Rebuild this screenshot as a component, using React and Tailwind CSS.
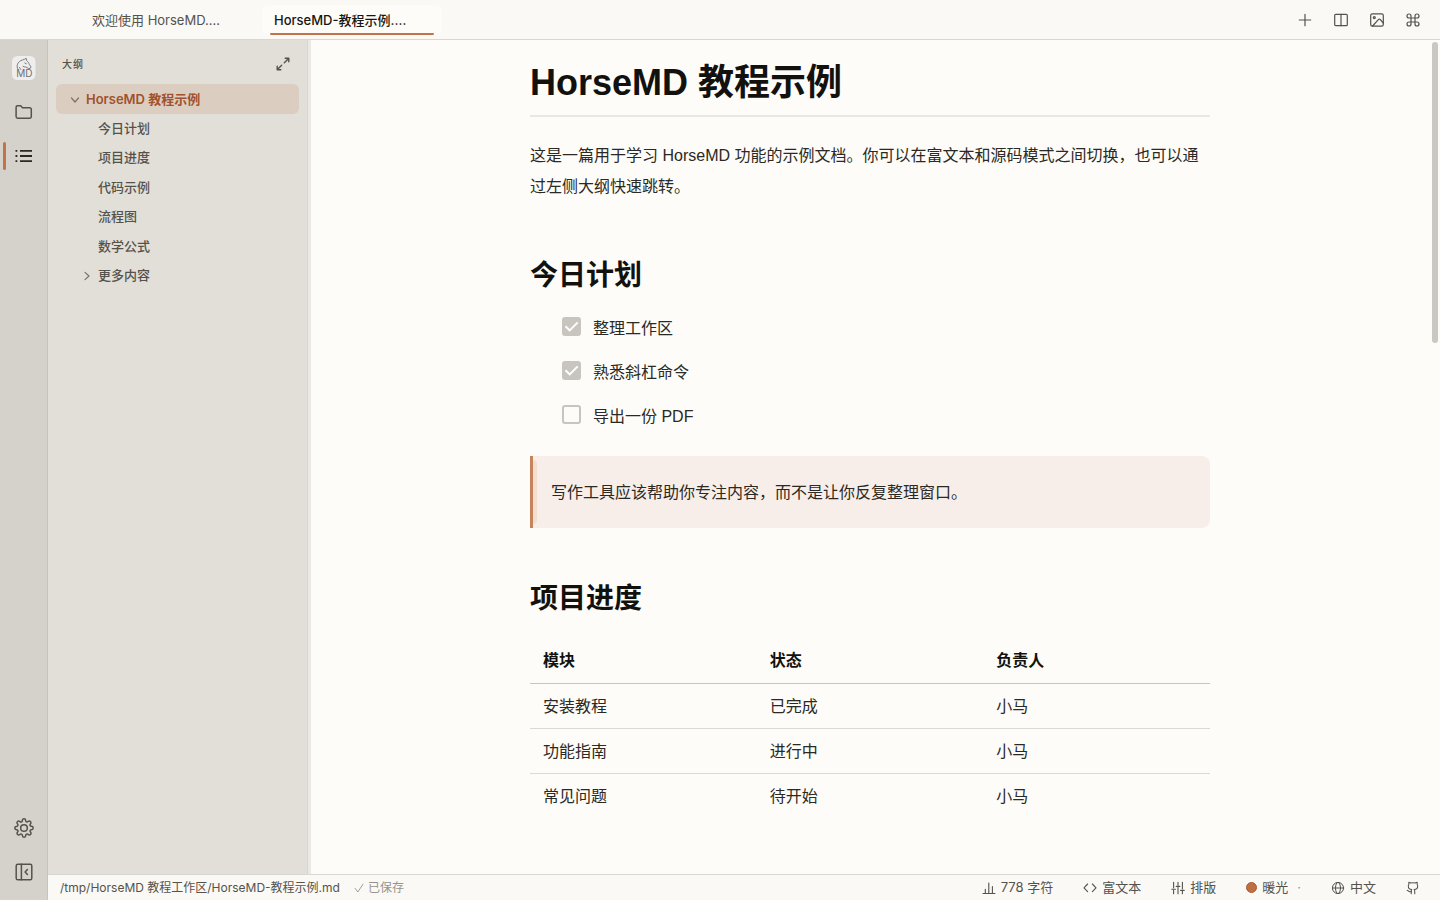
import React from "react";

const Icon = ({ children, size = 16, box = 16, sw = 1.2, className = "" }) => (
  <svg
    width={size}
    height={size}
    viewBox={`0 0 ${box} ${box}`}
    fill="none"
    stroke="currentColor"
    strokeWidth={sw}
    strokeLinecap="round"
    strokeLinejoin="round"
    className={`shrink-0 ${className}`}
    aria-hidden="true"
  >
    {children}
  </svg>
);

const PlusIcon = () => (
  <Icon><path d="M8 2.3v11.4M2.3 8h11.4" /></Icon>
);
const ColumnsIcon = () => (
  <Icon><rect x="1.7" y="2.3" width="12.6" height="11.4" rx="1" /><path d="M8 2.3v11.4" /></Icon>
);
const ImageIcon = () => (
  <Icon>
    <rect x="1.7" y="1.9" width="12.6" height="12.2" rx="1.6" />
    <circle cx="5.3" cy="5.6" r="1" />
    <path d="M3.6 14l6-6.6a1 1 0 0 1 1.5 0l3.2 3.6" />
  </Icon>
);
const CommandIcon = () => (
  <Icon size={16} box={24} sw={1.8}>
    <path d="M15 6v12a3 3 0 1 0 3-3H6a3 3 0 1 0 3 3V6a3 3 0 1 0-3 3h12a3 3 0 1 0-3-3" />
  </Icon>
);
const FolderIcon = () => (
  <Icon size={20} box={20} sw={1.5}>
    <path d="M2.100 14.600V5.200a1.400 1.400 0 0 1 1.400-1.400h3.200l1.800 2h7.200A1.600 1.600 0 0 1 17.300 7.400v7.200a1.600 1.600 0 0 1-1.600 1.600H3.700a1.600 1.600 0 0 1-1.600-1.600z" />
  </Icon>
);
const ListIcon = () => (
  <Icon size={20} box={20} sw={1.8}>
    <path d="M6 4.800H18M6 10H18M6 15.200H18" strokeLinecap="butt" />
    <path d="M1.500 4.800h1.800M1.500 10h1.800M1.500 15.200h1.800" strokeLinecap="butt" />
  </Icon>
);
const GearIcon = () => (
  <Icon size={20} box={24} sw={1.8}>
    <circle cx="12" cy="12" r="4" />
    <path d="M19.400 15a1.650 1.650 0 0 0 .33 1.820l.06.06a2 2 0 1 1-2.830 2.830l-.06-.06a1.650 1.650 0 0 0-1.820-.33 1.650 1.650 0 0 0-1 1.510V21a2 2 0 0 1-4 0v-.09A1.650 1.650 0 0 0 9 19.400a1.650 1.650 0 0 0-1.820.33l-.06.06a2 2 0 1 1-2.830-2.830l.06-.06a1.650 1.650 0 0 0 .33-1.820 1.650 1.650 0 0 0-1.510-1H3a2 2 0 0 1 0-4h.09A1.650 1.650 0 0 0 4.600 9a1.650 1.650 0 0 0-.33-1.820l-.06-.06a2 2 0 1 1 2.830-2.830l.06.06a1.650 1.650 0 0 0 1.820.33H9a1.650 1.650 0 0 0 1-1.510V3a2 2 0 0 1 4 0v.09a1.650 1.650 0 0 0 1 1.510 1.650 1.650 0 0 0 1.820-.33l.06-.06a2 2 0 1 1 2.830 2.830l-.06.06a1.650 1.650 0 0 0-.33 1.820V9a1.650 1.650 0 0 0 1.510 1H21a2 2 0 0 1 0 4h-.09a1.650 1.650 0 0 0-1.510 1z" />
  </Icon>
);
const CollapseIcon = () => (
  <Icon size={20} box={20} sw={1.5}>
    <rect x="2.200" y="2.200" width="15.600" height="15.600" rx="1.600" />
    <path d="M7.400 2.200v15.600M13.400 7.600L11.100 10l2.300 2.400" />
  </Icon>
);
const ExpandIcon = () => (
  <Icon size={16} sw={1.4}>
    <path d="M9.300 6.700L13.600 2.400M10.200 2.200h3.600v3.600M6.700 9.300L2.400 13.600M2.200 10.200V13.800h3.600" />
  </Icon>
);
const ChevronDown = () => (
  <Icon size={12} box={12}><path d="M2.500 4L6 8l3.500-4" /></Icon>
);
const ChevronRight = () => (
  <Icon size={12} box={12}><path d="M4 2.400L8 6l-4 3.600" /></Icon>
);
const ChartIcon = () => (
  <Icon size={14} box={14} sw={1.1}><path d="M1 12.500h12M3.300 12.300V8.200M6.800 12.300V2M10.400 12.300V5.600" /></Icon>
);
const CodeIcon = () => (
  <Icon size={14} box={14} sw={1.1}><path d="M4.600 3L1 6.800l3.600 3.800M9.400 3L13 6.800l-3.600 3.800" /></Icon>
);
const SlidersIcon = () => (
  <Icon size={14} box={14} sw={1.1}>
    <path d="M2.600 1.200v5.600M2.600 9.200v3.600M7 1.200v2.800M7 6.400v6.400M11.400 1.200v6.600M11.400 10.200v2.600M.8 8.200h3.600M5.200 5.400h3.600M9.600 9.400h3.600" />
  </Icon>
);
const GlobeIcon = () => (
  <Icon size={14} box={14} sw={1}>
    <circle cx="7" cy="7" r="5.600" />
    <ellipse cx="7" cy="7" rx="2.500" ry="5.600" />
    <path d="M1.400 7h11.200" />
  </Icon>
);
const GithubIcon = () => (
  <Icon size={14} box={24} sw={1.8}>
    <path d="M15 22v-4a4.800 4.800 0 0 0-1-3.500c3 0 6-2 6-5.500.08-1.250-.27-2.480-1-3.500.28-1.150.28-2.350 0-3.500 0 0-1 0-3 1.500-2.640-.5-5.360-.5-8 0C6 2 5 2 5 2c-.3 1.150-.3 2.350 0 3.500A5.403 5.403 0 0 0 4 9c0 3.500 3 5.500 6 5.500-.39.49-.68 1.050-.85 1.650-.17.6-.22 1.230-.15 1.850v4" />
    <path d="M9 18c-4.510 2-5-2-7-2" />
  </Icon>
);
const CheckIcon = () => (
  <Icon size={10} box={10} sw={0.9}><path d="M1.200 5.400L3.800 9 9 1.200" /></Icon>
);

const Logo = () => (
  <svg width="24" height="24" viewBox="0 0 24 24" className="shrink-0" role="img" aria-label="HorseMD">
    <rect x="0" y="0" width="23.500" height="24" rx="5.500" fill="#efeeec" />
    <g fill="none" stroke="#6d6e76" strokeWidth=".9" strokeLinecap="round" strokeLinejoin="round">
      <path d="M6 13.300C3.800 10.500 5.400 5.400 10.600 3.900l1.900-.5 1.600-1.200.5 2.400c1.600 1.200 2.200 2.600 2.800 4l1.600 2.300-.8 1.500-1.400.1-3.300-1.600c-1 .2-1.800 0-2.500-.5" />
      <path d="M12.800 7l1.500.7M8.800 13.500l-1.300-2" />
    </g>
    <text x="12.300" y="21.400" textAnchor="middle" fontSize="10" fill="#6d6e76" className="font-['Inter',sans-serif]">MD</text>
  </svg>
);

const outline = ["今日计划", "项目进度", "代码示例", "流程图", "数学公式"];
const tasks = [
  { id: "t1", label: "整理工作区", done: true },
  { id: "t2", label: "熟悉斜杠命令", done: true },
  { id: "t3", label: "导出一份 PDF", done: false },
];
const rows = [
  ["安装教程", "已完成", "小马"],
  ["功能指南", "进行中", "小马"],
  ["常见问题", "待开始", "小马"],
];
const tools = [
  ["新建", PlusIcon],
  ["分栏", ColumnsIcon],
  ["图片", ImageIcon],
  ["命令面板", CommandIcon],
];

function TopBar() {
  return (
    <header className="flex h-10 shrink-0 items-center justify-between border-b border-[#d9d7d1] bg-[#faf9f5] pr-[15px] pl-20">
      <nav className="flex gap-0.5" aria-label="标签页">
        <button className="h-[30px] w-[180px] px-3 pt-0.5 text-left text-[13px] text-[#55524c]">欢迎使用 HorseMD.…</button>
        <button className="relative h-[30px] w-[180px] rounded-md bg-[#fdfcf8] px-3 pt-0.5 text-left text-[13px] font-medium text-[#171612]">
          HorseMD-教程示例.…
          <span className="absolute inset-x-2 bottom-0 h-0.5 rounded-full bg-[#c4724a]" />
        </button>
      </nav>
      <div className="flex gap-3 text-[#55524c]">
        {tools.map(([name, Glyph]) => (
          <button key={name} aria-label={name} className="flex h-6 w-6 items-center justify-center">
            <Glyph />
          </button>
        ))}
      </div>
    </header>
  );
}

function Rail() {
  return (
    <aside className="flex w-12 shrink-0 flex-col justify-between border-r border-[#c8c4bc] bg-[#d5d2cb] text-[#55524c]">
      <div className="flex flex-col gap-4 pt-[14px]">
        <div className="flex h-7 items-center justify-center"><Logo /></div>
        <button aria-label="文件" className="flex h-7 items-center justify-center"><FolderIcon /></button>
        <button aria-label="大纲" className="relative flex h-7 items-center justify-center text-[#2b2924]">
          <span className="absolute top-0 left-[3px] h-7 w-[3px] rounded-sm bg-[#c4724a]" />
          <ListIcon />
        </button>
      </div>
      <div className="flex flex-col gap-4 pb-[14px]">
        <button aria-label="设置" className="flex h-7 items-center justify-center"><GearIcon /></button>
        <button aria-label="收起侧栏" className="flex h-7 items-center justify-center"><CollapseIcon /></button>
      </div>
    </aside>
  );
}

function Outline() {
  return (
    <aside className="flex w-[260px] shrink-0 flex-col border-r border-[#d9d6cf] bg-[#e2dfd8]">
      <div className="flex h-11 items-center justify-between pt-1 pr-4 pl-[14px] text-[#55524c]">
        <h2 className="text-[10px] font-medium tracking-widest">大纲</h2>
        <button aria-label="全部展开"><ExpandIcon /></button>
      </div>
      <nav className="flex flex-col pr-2 pl-2 text-[13px] leading-normal font-medium text-[#55524c]" aria-label="大纲">
        <a href="#top" className="flex items-center gap-[5px] rounded-md bg-[#dccdc1] pt-1.5 pb-1 pl-[13px] font-semibold text-[#a0522d]">
          <span className="text-[#77736b]"><ChevronDown /></span>
          HorseMD 教程示例
        </a>
        {outline.map((t) => (
          <a key={t} href={`#${t}`} className="py-[5px] pl-[42px]">{t}</a>
        ))}
        <a href="#more" className="flex items-center gap-[5px] py-[5px] pl-[25px]">
          <span className="text-[#77736b]"><ChevronRight /></span>
          更多内容
        </a>
      </nav>
    </aside>
  );
}

function Document() {
  return (
    <main className="relative min-w-0 flex-1 overflow-hidden bg-[#fdfcf8] pr-[11px]">
      <article className="mx-auto max-w-[680px] font-['Liberation_Sans','Noto_Sans_CJK_SC',sans-serif] text-base text-[#2b2924]">
        <h1 id="top" className="border-b-2 border-[#e9e7e3] pt-[19px] pb-2 text-4xl leading-12 font-bold text-[#12110d]">HorseMD 教程示例</h1>
        <p className="pt-[23px] leading-[31px]">
          这是一篇用于学习 HorseMD 功能的示例文档。你可以在富文本和源码模式之间切换，也可以通过左侧大纲快速跳转。
        </p>
        <h2 id="今日计划" className="pt-[54px] text-[28px] leading-10 font-bold text-[#12110d]">今日计划</h2>
        <ul className="flex flex-col gap-3 pt-[17px] pl-8">
          {tasks.map((t) => (
            <li key={t.id} className="flex h-8 items-center gap-3">
              <span className="relative -mt-1.5 flex h-[19px] w-[19px]">
                <input
                  id={t.id}
                  type="checkbox"
                  defaultChecked={t.done}
                  className="peer h-[19px] w-[19px] appearance-none rounded-[3px] border-2 border-[#c8c5be] checked:bg-[#c8c5be]"
                />
                <svg viewBox="0 0 19 19" className="pointer-events-none absolute inset-0 hidden h-[19px] w-[19px] peer-checked:block" fill="none" stroke="#fff" strokeWidth="2" aria-hidden="true">
                  <path d="M3.500 9.200l4.200 4.200 8-8" />
                </svg>
              </span>
              <label htmlFor={t.id}>{t.label}</label>
            </li>
          ))}
        </ul>
        <blockquote className="mt-[23px] flex h-[72px] items-center rounded-r-lg border-l-3 border-[#c4845c] bg-[#f8eee9]">
          <span className="h-16 w-1 rounded-r-sm bg-[#f3dfd1]" />
          <p className="pt-0.5 pl-[14px]">写作工具应该帮助你专注内容，而不是让你反复整理窗口。</p>
        </blockquote>
        <h2 id="项目进度" className="pt-[51px] text-[28px] leading-10 font-bold text-[#12110d]">项目进度</h2>
        <table className="mt-[19px] w-full table-fixed text-left">
          <thead>
            <tr className="h-[45px] border-b border-[#c8c5be] text-[#12110d]">
              {["模块", "状态", "负责人"].map((h) => (
                <th key={h} className="px-[13px] pt-0.5 font-bold">{h}</th>
              ))}
            </tr>
          </thead>
          <tbody>
            {rows.map((r) => (
              <tr key={r[0]} className="h-[45px] border-b border-[#dcdad4] last:border-0">
                {r.map((c) => (
                  <td key={c} className="px-[13px] pt-0.5">{c}</td>
                ))}
              </tr>
            ))}
          </tbody>
        </table>
      </article>
      <div className="absolute top-0.5 right-0.5 h-[301px] w-1.5 rounded-full bg-[#cbc8c2]" />
    </main>
  );
}

function StatusBar() {
  return (
    <footer className="flex h-[26px] shrink-0 items-center justify-between border-t border-[#d9d7d1] bg-[#faf9f5] pr-[20px] pl-3 text-[#55524c]">
      <div className="flex items-center gap-[14px] text-xs">
        <span>/tmp/HorseMD 教程工作区/HorseMD-教程示例.md</span>
        <span className="flex items-center gap-1 text-[#96938c]"><CheckIcon />已保存</span>
      </div>
      <div className="flex items-center gap-[30px] text-[13px]">
        <button className="flex items-center gap-[5px]"><ChartIcon />778 字符</button>
        <button className="flex items-center gap-[5px]"><CodeIcon />富文本</button>
        <button className="flex items-center gap-[5px]"><SlidersIcon />排版</button>
        <button className="flex items-center gap-[5px]">
          <span className="h-[11px] w-[11px] rounded-full border border-[#a85f38] bg-[#bf6f40]" />
          暖光
          <span className="pl-1 text-[#96938c]">·</span>
        </button>
        <button className="flex items-center gap-[5px]"><GlobeIcon />中文</button>
        <button aria-label="GitHub"><GithubIcon /></button>
      </div>
    </footer>
  );
}

export default function App() {
  return (
    <div className="flex h-screen flex-col bg-[#fdfcf8] font-['Inter','Noto_Sans_CJK_SC',sans-serif]">
      <TopBar />
      <div className="flex min-h-0 flex-1">
        <Rail />
        <div className="flex min-w-0 flex-1 flex-col">
          <div className="flex min-h-0 flex-1">
            <Outline />
            <div className="w-[3px] shrink-0 bg-[#ebe9e3]" />
            <Document />
          </div>
          <StatusBar />
        </div>
      </div>
    </div>
  );
}
